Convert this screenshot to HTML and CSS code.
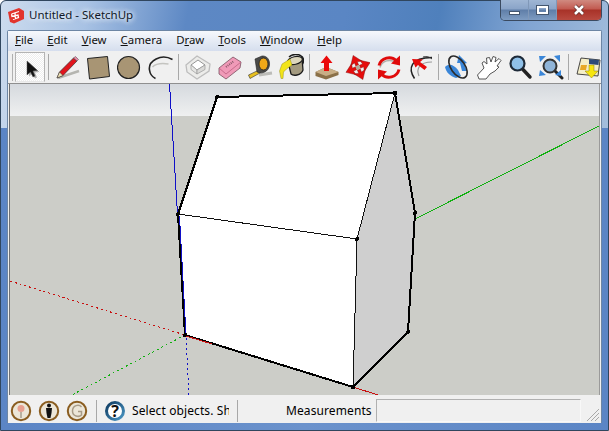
FILE: index.html
```html
<!DOCTYPE html>
<html lang="en">
<head>
<meta charset="utf-8">
<title>Untitled - SketchUp</title>
<link rel="stylesheet" href="styles.css">
</head>
<body>
<div class="window">
  <header class="titlebar">
    <svg class="app-icon" width="16" height="16" viewBox="0 0 16 16"><path d="M0 4 L11 0 L16 3 L16 11 L6 15.500 L2 14 Z" fill="#e2342c"/><path d="M3.500 6 L11 3.500 M3.500 6 L4 8.500 L10 7 L10.500 9.500 L5 11.500 M7 5 L7.500 11" fill="none" stroke="#fff" stroke-width="1.300"/></svg>
    <span class="title">Untitled - SketchUp</span>
    <div class="caption">
      <div class="cap cap-min"><i></i></div>
      <div class="cap cap-max"><i></i></div>
      <div class="cap cap-close">
        <svg width="14" height="12" viewBox="0 0 14 12"><path d="M3 2 L11 10 M11 2 L3 10" stroke="#5a2a26" stroke-width="4"/><path d="M3 2 L11 10 M11 2 L3 10" stroke="#fff" stroke-width="2.600"/></svg>
      </div>
    </div>
  </header>
  <div class="client">
    <nav class="menubar">
      <span><u>F</u>ile</span><span><u>E</u>dit</span><span><u>V</u>iew</span><span><u>C</u>amera</span><span>D<u>r</u>aw</span><span><u>T</u>ools</span><span><u>W</u>indow</span><span><u>H</u>elp</span>
    </nav>
    <div class="toolbar">
      <div class="grip"></div>
      <div class="tool active"><svg width="24" height="24" viewBox="0 0 24 24"><path d="M9 6 L9 20 L12.500 17 L15 22 L17 21 L15 16 L19.500 15.500 Z" fill="#000" opacity=".28" transform="translate(2 1.500)"/><path d="M9 6 L9 20 L12.500 17 L15 22 L17 21 L15 16 L19.500 15.500 Z" fill="#111" stroke="#555" stroke-width=".5"/></svg></div>
      <div class="sep s1"></div>
      <div class="tool"><svg width="26" height="26" viewBox="0 0 26 26"><path d="M3 24 L24 17" stroke="#b5b5b0" stroke-width="2.500"/><path d="M18.500 4 L22 7 L8 21.500 L2 24 L4.500 18 Z" fill="#e0141c" stroke="#333" stroke-width=".7"/><path d="M18.500 4 L20.500 2.500 L23.500 5.500 L22 7 Z" fill="#e88aa8" stroke="#444" stroke-width=".5"/><path d="M4.500 18 L8 21.500 L2 24 Z" fill="#ece3b6" stroke="#333" stroke-width=".5"/></svg></div>
      <div class="tool"><svg width="26" height="26" viewBox="0 0 26 26"><path d="M1.500 4.500 L21.500 2.500 L23.500 22.500 L3.500 25 Z" fill="#a89574" stroke="#222" stroke-width="1"/></svg></div>
      <div class="tool"><svg width="26" height="26" viewBox="0 0 26 26"><circle cx="11.500" cy="13.500" r="11" fill="#a89574" stroke="#222" stroke-width="1.200"/></svg></div>
      <div class="tool"><svg width="26" height="26" viewBox="0 0 26 26"><path d="M24.500 5.500 C13 -1 0 7 1.500 16 C2 20 4.500 23 7.500 24.500" fill="none" stroke="#222" stroke-width="1.600"/><path d="M4.500 13 C8 9.500 14 9 20.500 10" fill="none" stroke="#c4c4c0" stroke-width="1.500"/></svg></div>
      <div class="sep s2"></div>
      <div class="tool"><svg width="26" height="26" viewBox="0 0 26 26"><path d="M1 11 L12 2 L25 10 L24 17 L12 25 L2 18 Z" fill="#ececea" stroke="#bdbdbd" stroke-width="1.300"/><path d="M6 11 L13 6 L20 11 L12 16 Z" fill="#fff" stroke="#8a8a8a" stroke-width=".9"/><path d="M6 11 L12 16 L12 20 L6 15.500 Z" fill="#e6e6e4" stroke="#999" stroke-width=".7"/><path d="M12 16 L20 11 L20 15.500 L12 20 Z" fill="#dadad8" stroke="#999" stroke-width=".7"/></svg></div>
      <div class="tool"><svg width="26" height="26" viewBox="0 0 26 26"><path d="M3 14 L17 3 L25 8 L24 14 L10 25 L3 20 Z" fill="#f09ab8" stroke="#7a5060" stroke-width=".8"/><path d="M3 14 L10 20 L25 8" fill="none" stroke="#c86c8c" stroke-width="1"/><path d="M10 13 L18 7" stroke="#8c5a6c" stroke-width="2" stroke-dasharray="1 1"/></svg></div>
      <div class="tool"><svg width="26" height="26" viewBox="0 0 26 26"><path d="M12 21 L25 19" stroke="#bcbcb8" stroke-width="3"/><path d="M1.500 21 L12 16 L13 19 L3 24.500 Z" fill="#e8c020" stroke="#333" stroke-width=".6"/><path d="M8 5 L15 2 C20 1.500 23 6 22.500 11 C22 16 18 19 13 19 L10 18 Z" fill="#4a4a48" stroke="#222" stroke-width=".6"/><ellipse cx="16.500" cy="10" rx="4.500" ry="6" fill="#f0a818" stroke="#222" stroke-width=".8"/></svg></div>
      <div class="tool"><svg width="26" height="26" viewBox="0 0 26 26"><path d="M10 8 L24 4 L25 16 C23 22 15 22 13 20 Z" fill="#a39a80" stroke="#1c1c1c" stroke-width="1.300"/><ellipse cx="17" cy="6.500" rx="7.500" ry="3.800" fill="#dcd6bc" stroke="#1c1c1c" stroke-width="1.200" transform="rotate(-12 17 6.500)"/><path d="M11 3 C14 0 20 -0.500 23 2 C26 3 26 8 24.500 10" fill="none" stroke="#1c1c1c" stroke-width="1.500"/><path d="M12 5 L4 10 L1.500 17 L3 24.500 L5 24.500 L5.500 18 L8.500 15 L14 11 Z" fill="#f2e41a" stroke="#807810" stroke-width=".4"/></svg></div>
      <div class="sep s3"></div>
      <div class="tool"><svg width="26" height="26" viewBox="0 0 26 26"><path d="M2.500 18 L13 13 L25.500 18 L25.500 21 L13 25.500 L2.500 22 Z" fill="#8a7048"/><path d="M2.500 18 L13 22 L25.500 18 L13 13 Z" fill="#c8ae86"/><path d="M13.500 1.500 L19.500 9 L16 9 L16 17 L11 17 L11 9 L7.500 9 Z" fill="#ea0a0a"/></svg></div>
      <div class="tool"><svg width="26" height="26" viewBox="0 0 26 26"><g fill="#e60c0c" stroke="#801010" stroke-width=".4"><path d="M0 -13 L6 -4.500 L1.500 -5.500 L1.500 -2 L-1.500 -2 L-1.500 -5.500 L-6 -4.500 Z" transform="translate(14 13.500) rotate(-22)"/><path d="M0 -13 L6 -4.500 L1.500 -5.500 L1.500 -2 L-1.500 -2 L-1.500 -5.500 L-6 -4.500 Z" transform="translate(14 13.500) rotate(68)"/><path d="M0 -13 L6 -4.500 L1.500 -5.500 L1.500 -2 L-1.500 -2 L-1.500 -5.500 L-6 -4.500 Z" transform="translate(14 13.500) rotate(158)"/><path d="M0 -13 L6 -4.500 L1.500 -5.500 L1.500 -2 L-1.500 -2 L-1.500 -5.500 L-6 -4.500 Z" transform="translate(14 13.500) rotate(248)"/></g><circle cx="14" cy="13.500" r="2.200" fill="#b4a898"/></svg></div>
      <div class="tool"><svg width="26" height="26" viewBox="0 0 26 26"><g transform="translate(1 .5)"><path d="M4 13 C6 6 14 4 20 8" fill="none" stroke="#b0b0ac" stroke-width="1.500"/><path d="M3 11 C5 3 15 1 20 6" fill="none" stroke="#e00a0a" stroke-width="3"/><path d="M24 1 L24 11 L15 9 Z" fill="#e00a0a"/><path d="M23 15 C21 23 11 25 6 20" fill="none" stroke="#e00a0a" stroke-width="3"/><path d="M2 25 L2 15 L11 17 Z" fill="#e00a0a"/></g></svg></div>
      <div class="tool"><svg width="26" height="26" viewBox="0 0 26 26"><g transform="translate(1 0)"><path d="M7.500 24.500 C1 15 3 3.500 25 3.500" fill="none" stroke="#222" stroke-width="1.500"/><path d="M12 22 C9 15 12 8 25 8" fill="none" stroke="#999" stroke-width="1.100"/><path d="M16 3 C20 2 23 3 25 5" fill="none" stroke="#333" stroke-width="1"/><path d="M5 5 L16 5.500 L13 8 L20 13 L17.500 16 L11 11 L8.500 13.500 Z" fill="#e60a0a"/></g></svg></div>
      <div class="sep s4"></div>
      <div class="tool"><svg width="26" height="26" viewBox="0 0 26 26"><path d="M0 13 C4 9 9 11 13 16 L16 22 L11 24 C5 22 1 18 0 13 Z" fill="#3a86d8"/><path d="M14 1 L22 9 L19 10 L22 17 L17 17 L15 9 L12 9 Z" fill="#3a86d8"/><ellipse cx="13" cy="13" rx="7" ry="12.500" fill="none" stroke="#2a2a2a" stroke-width="1.600" transform="rotate(-35 13 13)"/></svg></div>
      <div class="tool"><svg width="26" height="26" viewBox="0 0 26 26"><path d="M3 25 L1.500 21 L8 14 L6 9 L8 7.500 L11 10 L10.500 4 L13.500 3.500 L15 8 L17 2.500 L20 3.500 L19 8 L23 4.500 L25 6.500 L21 12 L23 13 L19 17 L14 20 L10 25 Z" fill="#fff" stroke="#444" stroke-width=".9" stroke-linejoin="round"/></svg></div>
      <div class="tool"><svg width="26" height="26" viewBox="0 0 26 26"><path d="M15.500 15 L23 23" stroke="#222" stroke-width="3.400" stroke-linecap="round"/><circle cx="10.500" cy="9.500" r="7" fill="#8fc0e8" stroke="#1e2a38" stroke-width="2.200"/></svg></div>
      <div class="tool"><svg width="26" height="26" viewBox="0 0 26 26"><path d="M16 16 L24 24" stroke="#222" stroke-width="3" stroke-linecap="round"/><circle cx="12" cy="12" r="6.500" fill="#8fb4d8" stroke="#333" stroke-width="2"/><path d="M1 2 L8 2 L2 8 Z M22 1 L16 2 L22 8 Z M1 22 L2 16 L8 21 Z M23 16 L17 21 L23 22 Z" fill="#3a86d8"/></svg></div>
      <div class="sep s5"></div>
      <div class="tool last"><svg width="26" height="26" viewBox="0 0 26 26"><path d="M5 4 L24 6 L22 22 L1 20 Z" fill="#f4eec8" stroke="#333" stroke-width=".9"/><path d="M13 5 L23 6 L22.500 11 L13 10 Z" fill="#2d4a78"/><path d="M5 11 L11 11 L10 16 L4 16 Z" fill="#e8a828"/><path d="M13 11 L18 11 L18 17 L22 17 L15.500 24 L9 17 L13 17 Z" fill="#f6e60e" stroke="#8a7a10" stroke-width=".5"/></svg></div>
    </div>
    <main class="viewport">
      <svg class="scene" width="589" height="312" viewBox="2 0 589 312">
        <path class="axis-blue" d="M161.500 0 L177 251"/>
        <path class="axis-blue dots" d="M178 254 L181 312"/>
        <path class="axis-green" d="M407 135 L591 42"/>
        <path class="axis-green dots" d="M177 251 L62 312"/>
        <path class="axis-red dots" d="M2 197 L177 251"/>
        <path class="axis-red" d="M345 303 L370 311"/>
        <path class="roof" d="M209 13 L387 9 L349 155 L170 130 Z"/>
        <path class="front" d="M170 130 L349 155 L345 303 L177 251 Z"/>
        <path class="side" d="M387 9 L407 129 L400 248 L345 303 L349 155 Z"/>
        <path class="thin" d="M170 130 L349 155 L387 9 M349 155 L345 303"/>
        <path class="edge" d="M170 130 L209 13 L387 9 L407 129 L400 248 L345 303 L177 251 Z"/>
        <path class="axis-blue over" d="M171.500 132 L178 251"/>
        <path class="axis-red over" d="M178 252 L204 260"/>
        <g class="pts">
          <circle cx="209" cy="13" r="2"/><circle cx="387" cy="9" r="2.500"/><circle cx="170" cy="130" r="2"/><circle cx="349" cy="155" r="2"/><circle cx="407" cy="129" r="2"/><circle cx="400" cy="248" r="2"/><circle cx="345" cy="303" r="2.500"/><circle cx="177" cy="251" r="2"/>
        </g>
      </svg>
    </main>
    <footer class="statusbar">
      <div class="geo"><svg width="22" height="22" viewBox="0 0 22 22"><circle cx="11" cy="11" r="9.200" fill="#ece6d8" stroke="#8a5d20" stroke-width="2"/><circle cx="11" cy="8.500" r="3.500" fill="#e8a090"/><path d="M11 12 L11 18" stroke="#b8b0a0" stroke-width="2"/></svg></div>
      <div class="geo"><svg width="22" height="22" viewBox="0 0 22 22"><circle cx="11" cy="11" r="9.200" fill="#ece6d8" stroke="#8a5d20" stroke-width="2"/><circle cx="11" cy="5.500" r="2" fill="#111"/><path d="M8 8 L14 8 L13.500 13 L12.500 18 L9.500 18 L8.500 13 Z" fill="#111"/></svg></div>
      <div class="geo"><svg width="22" height="22" viewBox="0 0 22 22"><circle cx="11" cy="11" r="9.200" fill="#ece6d8" stroke="#8a5d20" stroke-width="2"/><path d="M15.500 7 C13 4 6.500 5 6.500 11 C6.500 16.500 13 17.500 15.500 15 L15.500 11.500 L12 11.500" fill="none" stroke="#a89c88" stroke-width="1.500"/></svg></div>
      <div class="vsep v1"></div>
      <div class="help"><svg width="22" height="22" viewBox="0 0 22 22"><defs><linearGradient id="ring" x1="0" y1="0" x2="1" y2="1"><stop offset="0" stop-color="#0f3a60"/><stop offset="1" stop-color="#4a96c4"/></linearGradient></defs><circle cx="11" cy="11" r="8.500" fill="#fff" stroke="url(#ring)" stroke-width="3"/></svg><b>?</b></div>
      <div class="hint"><span>Select objects. Shift</span></div>
      <div class="vsep v2"></div>
      <div class="measure">Measurements</div>
      <div class="measure-box"></div>
      <svg class="resize" width="14" height="14" viewBox="0 0 14 14"><path d="M13 1 L1 13 M13 5 L5 13 M13 9 L9 13" stroke="#a8a8a8" stroke-width="1"/></svg>
    </footer>
  </div>
</div>
</body>
</html>
```
FILE: styles.css
```css
* { box-sizing: border-box; }
html, body { margin: 0; height: 100%; overflow: hidden; background: #fff; }
body { font-family: "Noto Sans", "DejaVu Sans", sans-serif; font-size: 12px; color: #000; }
.window {
  width: 609px; height: 431px; display: flex; flex-direction: column;
  border: 1px solid #30465e; border-radius: 6px 6px 0 0;
  padding: 0 6px 7px 6px;
  background:
    linear-gradient(100deg, #cddcee 0%, #a8c2e4 14%, #5d88c4 30%, #5a86c4 55%, #4f80bc 70%, #80a4d2 84%, #a4bedc 100%) 0 0 / 100% 127px no-repeat,
    linear-gradient(90deg, #5b85c5, #6b92cc 50%, #5b85c5);
}
.titlebar { height: 29px; flex: none; display: flex; align-items: flex-start; position: relative; }
.app-icon { margin: 7px 5px 0 1px; flex: none; }
.title { margin-top: 6px; font-size: 11.500px; color: #101828; text-shadow: 0 0 6px #e4ecf6, 0 0 6px #e4ecf6, 0 0 4px #e4ecf6; }
.caption { position: absolute; top: -1px; right: 0; width: 102px; height: 21px; display: flex; border: 1px solid #3a4a60; border-top: 0; border-radius: 0 0 5px 5px; overflow: hidden; }
.cap { display: flex; align-items: center; justify-content: center; height: 100%; border-left: 1px solid #8098b8; flex: none; }
.cap-min, .cap-max { width: 28px; background: linear-gradient(#9fb6d4 0%, #8aa4c8 45%, #5f7ea8 50%, #7e9cc2 100%); }
.cap-min { width: 27px; border-left: 0; padding-top: 6px; }
.cap-min i { width: 11px; height: 4px; background: #fff; border: 1px solid #44566e; }
.cap-max i { width: 11px; height: 8px; border: 2px solid #fff; outline: 1px solid #44566e; }
.cap-close { flex: 1; background: linear-gradient(#d08a80 0%, #c25a50 45%, #a83228 50%, #b84a40 100%); }
.client { flex: 1; min-height: 0; display: flex; flex-direction: column; background: #f0f0f0; border: 1px solid #6d86a4; border-bottom: 0; border-radius: 2px 2px 0 0; }
.menubar { height: 20px; flex: none; display: flex; padding: 1px 0 0 7px; gap: 14px; font-size: 11.400px; line-height: 16px; background: linear-gradient(#f6f8fc, #dfe6f2 70%, #d6deee); color: #101010; }
.toolbar { height: 33px; flex: none; display: flex; align-items: center; padding-left: 4px; background: #f0f0f0; border-bottom: 1px solid #8f8f8f; overflow: hidden; }
.grip { width: 1px; height: 27px; background: #b0b0b0; margin-right: 2px; flex: none; }
.tool { width: 31px; height: 28px; flex: none; display: flex; align-items: center; justify-content: center; }
.tool.active { width: 30px; height: 30px; border: 1px solid #b4b4b4; border-bottom-color: #e8e8e8; background: repeating-conic-gradient(#fff 0 25%, #eee 0 50%) 0 0 / 2px 2px; }
.tool.last { width: 26px; }
.sep { width: 1px; height: 26px; background: #a8a8a8; flex: none; }
.s1 { margin: 0 3px; }
.s2 { margin: 0 3px 0 2px; }
.s3 { margin: 0 0 0 3px; }
.s4 { margin: 0 3px 0 4px; }
.s5 { margin: 0 7px 0 2px; }
.viewport { flex: 1; min-height: 0; margin: 0 1px; background: linear-gradient(#d5d9de 0, #eff0f0 32px, #cccdc8 32px); overflow: hidden; border-left: 1px solid #6f7072; border-right: 1px solid #9a9a9a; }
.scene { display: block; shape-rendering: crispEdges; }
.axis-blue, .axis-green, .axis-red { fill: none; stroke-width: 1; }
.axis-blue { stroke: #1010c8; }
.axis-green { stroke: #10b010; }
.axis-red { stroke: #c81010; }
.dots { stroke-dasharray: 2 3; }
.over { stroke-width: 1; }
.roof, .front { fill: #fff; }
.side { fill: #cfcfcf; }
.thin { fill: none; stroke: #111; stroke-width: 1; }
.edge { fill: none; stroke: #000; stroke-width: 2; stroke-linejoin: round; }
.pts circle { fill: #000; }
.statusbar { height: 28px; flex: none; display: flex; align-items: center; padding-top: 3px; background: #f0f0f0; position: relative; }
.geo { width: 26px; height: 24px; margin-right: 2px; display: flex; align-items: center; justify-content: center; flex: none; }
.vsep { width: 1px; height: 22px; background: #a8a8a8; flex: none; }
.v1 { margin: 0 7px 0 4px; }
.v2 { margin-left: 8px; }
.help { position: relative; width: 22px; height: 22px; flex: none; margin-right: 6px; }
.help svg { display: block; }
.help b { position: absolute; inset: 0; text-align: center; line-height: 22px; font-size: 16px; color: #101010; }
.hint { width: 97px; overflow: hidden; white-space: nowrap; font-size: 12px; letter-spacing: .1px; flex: none; }
.measure { margin-left: 48px; font-size: 12px; letter-spacing: .1px; flex: none; }
.measure-box { width: 205px; height: 23px; margin-left: 4px; border: 1px solid #b0b0b0; border-right-color: #f8f8f8; border-bottom-color: #f8f8f8; flex: none; }
.resize { position: absolute; right: 1px; bottom: 1px; }
```
